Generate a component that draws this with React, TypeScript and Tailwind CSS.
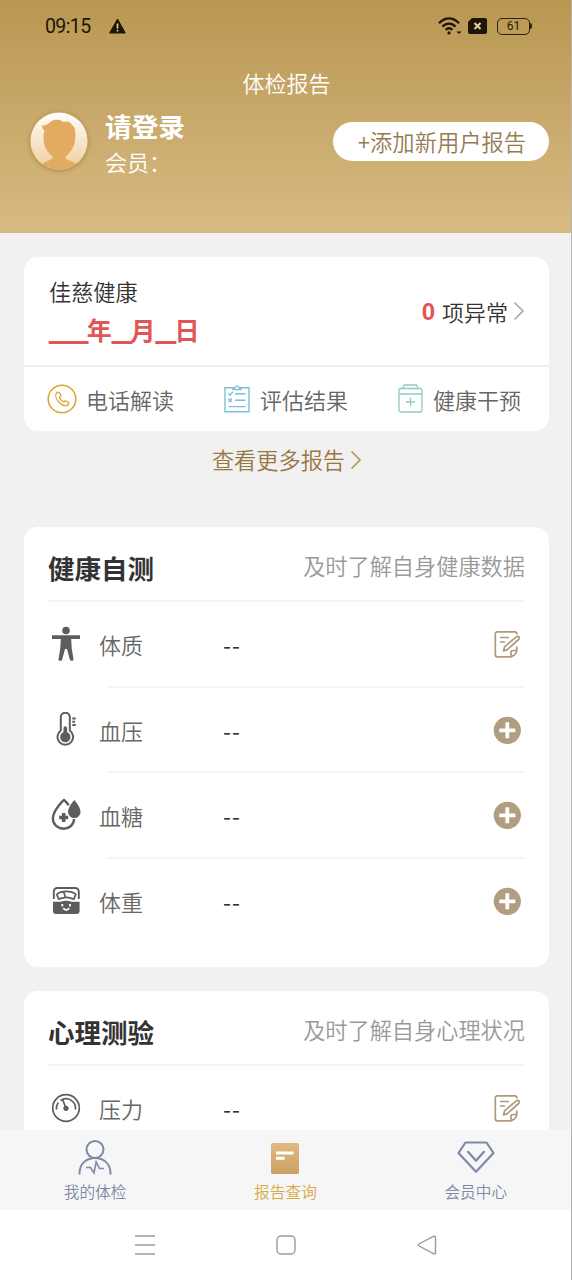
import type { ReactNode } from "react";

const Wifi = () => (
  <svg className="h-[18px] w-[24px]" viewBox="0 0 24 18" fill="none" stroke="#1d1608" strokeWidth="2.300">
    <path d="M1 6.200C7-.3 15-.3 21 6.200" />
    <path d="M4.400 9.600c4-4.100 9.200-4.100 13.200 0" />
    <path d="M7.600 12.800c2.200-2 4.600-2 6.800 0" />
    <circle cx="11" cy="15.900" r="1.600" fill="#1d1608" stroke="none" />
    <path d="M18.500 14.500h5L21 17z" fill="#1d1608" stroke="none" />
  </svg>
);

const StatusBar = () => (
  <div className="flex h-[52px] items-center pl-[45px] pr-[39px] text-[#1d1608]">
    <span className="w-[64px] pt-[2px] font-[Roboto,sans-serif] text-[19.500px] leading-none tracking-[-0.600px]">09:15</span>
    <svg className="h-[16px] w-[17px]" viewBox="0 0 17 16">
      <path d="M8.500 1 16.300 15H.7z" fill="#1d1608" stroke="#1d1608" strokeLinejoin="round" />
      <path d="M8.500 5.500v5M8.500 11.800v1.800" stroke="#e6cf9c" strokeWidth="1.600" />
    </svg>
    <div className="ml-auto flex items-center">
      <Wifi />
      <svg className="ml-[6px] h-[16px] w-[19px]" viewBox="0 0 19 16">
        <path d="M4 0h13a2 2 0 0 1 2 2v12a2 2 0 0 1-2 2H2a2 2 0 0 1-2-2V4z" fill="#1d1608" />
        <path d="m6.500 5 6 6m0-6-6 6" stroke="#e6cf9c" strokeWidth="2" />
      </svg>
      <div className="ml-[10px] flex h-[17px] w-[33px] items-center justify-center rounded-[5px] border-[1.500px] border-[#2c210e] font-[Roboto,sans-serif] text-[12px]">
        61
      </div>
      <div className="h-[6px] w-[2px] rounded-r bg-[#2c210e]" />
    </div>
  </div>
);

const Avatar = () => (
  <svg className="h-[58px] w-[58px] rounded-full shadow-[0_1px_4px_rgba(130,85,20,0.45)]" viewBox="0 0 58 58">
    <defs>
      <linearGradient id="avatarBg" x1="0" y1="0" x2="0" y2="1">
        <stop offset="0" stopColor="#fffefa" />
        <stop offset="1" stopColor="#f0cd9c" />
      </linearGradient>
      <clipPath id="avatarClip">
        <circle cx="29" cy="29" r="28.500" />
      </clipPath>
    </defs>
    <circle cx="29" cy="29" r="28.500" fill="url(#avatarBg)" />
    <g clipPath="url(#avatarClip)" fill="#e2ab5f">
      <path d="M12 13.500C15 13.800 17 13 19.500 10.800 22.500 7 30 7 33 10 36 8.800 41 9.500 42 13 45.500 15 45.500 21 45.200 26.500 44.900 33 42.500 37.500 38 42.500L33 47H25L20 42.500C15.500 37.500 13.500 32 13.500 26 13.500 22.500 13.800 20.500 14.500 18.500 13 17.500 12 15.500 12 13.500Z" />
      <path d="M24 42h10c0 3 1.500 5 5 6.500 4.500 1.800 8 3.500 9 6v6H10v-6c1-2.500 4.500-4.200 9-6 3.500-1.500 5-3.500 5-6.500z" />
    </g>
  </svg>
);

const Chevron = ({ color }: { color: string }) => (
  <svg className="h-[20px] w-[12px]" viewBox="0 0 12 20" fill="none">
    <path d="m1.500 1.500 8.500 8.500-8.500 8.500" stroke={color} strokeWidth="1.700" />
  </svg>
);

const PhoneIcon = () => (
  <svg className="h-[30px] w-[30px]" viewBox="0 0 30 30" fill="none" stroke="#dba637">
    <circle cx="15" cy="15" r="13.800" strokeWidth="1.600" />
    <path
      strokeWidth="1.400"
      strokeLinejoin="round"
      d="M9.200 9.300c1.200-1.600 2.600-1.600 3.600 0l.8 1.600c.5 1.100-.1 1.700-1.100 2.400.5 2 2.200 3.800 4.400 4.600.9-1.200 1.800-1.300 2.900-.6l1.400 1c1 .8.600 2-.7 2.900-2.200 1.500-5.500 0-8-2.400-2.700-2.600-4.900-6.800-3.300-9.500z"
    />
  </svg>
);

const ResultIcon = () => (
  <svg className="h-[28px] w-[26px]" viewBox="0 0 26 28" fill="none" stroke="#7cc0dc" strokeWidth="1.400">
    <path d="M9 2.800H1v24h24v-24h-8M9 4.500V2.800h1.800a2.300 2.300 0 0 1 4.400 0H17v1.700z" />
    <path d="M11 8.800h10.500M11 15.200h10.500M4.500 21.600h17M4.200 8.500 6 10.200l3-3.600M4.500 13.500l3.400 3.400m0-3.400-3.400 3.400" />
  </svg>
);

const CareIcon = () => (
  <svg className="h-[29px] w-[25px]" viewBox="0 0 25 29" fill="none" stroke="#90cabe" strokeWidth="1.300">
    <path d="M4.500 4.500 6.500 1h12l2 3.500" />
    <rect x="1" y="4.500" width="23" height="23.500" rx="2" />
    <path d="M1 10h23M12.500 13.500v9M8 18h9" />
  </svg>
);

const BodyIcon = () => (
  <svg className="h-[36px] w-[30px]" viewBox="0 0 30 36" fill="#5d5d5d">
    <circle cx="15" cy="4.500" r="3.800" />
    <path d="M1 9.200h28v3.900h-8.800l.5 9.100 1.800 11c.1 1.900-3.200 2.100-3.700.2L16 23h-2l-2.800 10.400c-.5 1.900-3.900 1.700-3.700-.2l1.800-11 .5-9.100H1z" />
  </svg>
);

const PressureIcon = () => (
  <svg className="h-[36px] w-[30px]" viewBox="0 0 30 36" fill="none" stroke="#5d5d5d" strokeWidth="2">
    <path d="M9.800 18.500V5.200a4.500 4.500 0 0 1 9 0v13.300a7.800 7.800 0 1 1-9 0z" />
    <circle cx="14.300" cy="25" r="5.200" fill="#5d5d5d" stroke="none" />
    <path d="M14.300 25v-9" strokeWidth="3.600" strokeLinecap="round" />
    <path d="M21.300 6.400h3.500M21.300 9.700h2.800M21.300 13h3.500" />
  </svg>
);

const SugarIcon = () => (
  <svg className="h-[36px] w-[30px]" viewBox="0 0 30 36">
    <path
      d="M17.800 8.200C15.600 5.300 13 2.800 13 2.800S1.900 13 1.900 21.500c0 6.200 5 10.200 10.800 10.200 5.500 0 10.200-4 10.400-9.700"
      fill="none"
      stroke="#5d5d5d"
      strokeWidth="2.400"
      strokeLinejoin="round"
    />
    <path d="M12.700 16v9M8.200 20.500h9" stroke="#5d5d5d" strokeWidth="3.600" />
    <path d="M23.300 3s-6.300 7-6.300 11.800a6.300 6.300 0 0 0 12.600 0C29.600 10 23.300 3 23.300 3z" fill="#5d5d5d" />
  </svg>
);

const WeightIcon = () => (
  <svg className="h-[36px] w-[30px]" viewBox="0 0 30 36" fill="none" stroke="#5d5d5d">
    <path d="M2.800 16V8.500A3.500 3.500 0 0 1 6.300 5h18a3.500 3.500 0 0 1 3.500 3.500V16" strokeWidth="1.900" />
    <path d="M5.800 11.300c4.500-4 14.500-4 19 0l-2 4.800q-7.500-3.300-15 0zM12.800 9l1.500 5" strokeWidth="1.700" strokeLinejoin="round" />
    <path d="M2 18.800h7.500q5.500-2 11 0h8.100v9.300a3 3 0 0 1-3 3H5a3 3 0 0 1-3-3z" fill="#5d5d5d" stroke="none" />
    <path d="M11.300 21v2.500M19 21v2.500M12.500 25c1 2.600 4.500 2.600 5.500 0" stroke="#fff" strokeWidth="1.800" />
  </svg>
);

const StressIcon = () => (
  <svg className="h-[36px] w-[30px]" viewBox="0 0 30 36" fill="none" stroke="#5d5d5d" strokeWidth="1.700">
    <circle cx="15" cy="18" r="13.300" />
    <path d="M5.500 19.500a9.500 9.500 0 0 1 1.800-7M9.500 10.500a9.500 9.500 0 0 1 14.900 9M15 18.200l-3.300-8.500" />
    <circle cx="15" cy="18.300" r="2.600" fill="#5d5d5d" stroke="none" />
  </svg>
);

const EditIcon = () => (
  <svg className="h-[28px] w-[28px]" viewBox="0 0 28 28" fill="none" stroke="#ad9a7d" strokeWidth="1.700" strokeLinejoin="round">
    <path d="M23.800 4.500v-.7a2 2 0 0 0-2-2H4.300a2 2 0 0 0-2 2v21a2 2 0 0 0 2 2H18c3.500-1.300 5.800-3.800 5.800-7v-3.300" />
    <path d="M18 26.500v-4.200c0-1.200.8-1.800 2-1.800h3.500M7 7.500h9M7 12h5" />
    <path d="m10.500 21 1.200-4.300L23.300 6.800c2-1.400 4 .8 2.300 2.700L14.300 19.600z" />
  </svg>
);

const AddIcon = () => (
  <svg className="h-[28px] w-[28px]" viewBox="0 0 28 28">
    <circle cx="14.300" cy="14.300" r="13.600" fill="#b19d80" />
    <path d="M14.300 6.300v16M6.300 14.300h16" stroke="#fff" strokeWidth="3.800" />
  </svg>
);

interface RowProps {
  icon: ReactNode;
  label: string;
  action: ReactNode;
  divider?: boolean;
}

const Row = ({ icon, label, action, divider }: RowProps) => (
  <div>
    <div className="flex h-[83.700px] items-center pl-[3px] pr-[4px]">
      {icon}
      <span className="ml-[18px] w-[124px] pt-[1px] text-[22px] font-[350] text-[#666]">{label}</span>
      <span className="pt-[1px] text-[23px] tracking-[1px] text-[#333]">--</span>
      <div className="ml-auto">{action}</div>
    </div>
    <div className={divider ? "ml-[59px] h-[2px] bg-[#f5f5f5]" : "h-[2px]"} />
  </div>
);

const SectionHead = ({ title, hint }: { title: string; hint: string }) => (
  <div className="flex h-[75px] items-center justify-between border-b-2 border-[#f4f4f4]">
    <h2 className="pt-[9px] text-[26.500px] font-bold text-[#333]">{title}</h2>
    <span className="pt-[4px] text-[22.200px] font-[350] text-[#999]">{hint}</span>
  </div>
);

const Blank = ({ children }: { children: string }) => (
  <span className="font-['Liberation_Sans',sans-serif] text-[20px] font-bold tracking-[-1.700px] [text-shadow:0_-1px_0_currentColor,0_1px_0_currentColor]">
    {children}
  </span>
);

const ReportCard = () => (
  <section className="flex h-[174px] flex-col rounded-[14px] bg-white">
    <div className="flex h-[108px] items-center justify-between pl-[25px] pr-[24px]">
      <div>
        <p className="pt-[3px] text-[22.200px] font-[350] leading-[36px] text-[#333]">佳慈健康</p>
        <p className="text-[25px] font-bold leading-[40px] text-[#e05656]">
          <Blank>____</Blank>年<Blank>__</Blank>月<Blank>__</Blank>日
        </p>
      </div>
      <div className="flex items-center text-[22px] font-[350] text-[#333]">
        <span className="mr-[7px] pt-[2px] font-['Liberation_Sans',sans-serif] text-[24px] font-bold text-[#e05656]">0</span>
        项异常
        <span className="ml-[5px]">
          <Chevron color="#aaa" />
        </span>
      </div>
    </div>
    <div className="h-[2px] bg-[#efefef]" />
    <div className="flex flex-1 items-center justify-between pl-[23px] pr-[28px] pb-[1px] text-[22px] font-[350] leading-[30px] text-[#666]">
      <div className="flex items-center gap-[9px]">
        <PhoneIcon />
        电话解读
      </div>
      <div className="flex items-center gap-[10px]">
        <ResultIcon />
        评估结果
      </div>
      <div className="flex items-center gap-[10px]">
        <CareIcon />
        健康干预
      </div>
    </div>
  </section>
);

const TabBar = () => (
  <nav className="grid h-[80px] shrink-0 grid-cols-3 bg-[#f6f6f7] text-[15.700px] font-[350] leading-[24px] text-[#7c8ba5]">
    <div className="flex flex-col items-center pt-[9px]">
      <svg className="mb-[4px] h-[37px] w-[34px]" viewBox="0 0 34 37" fill="none" stroke="#7c8ba5" strokeWidth="2">
        <circle cx="17" cy="10.500" r="8.500" />
        <path d="M1.500 35.500v-2C2 24.500 8.500 19 17 19s15 5.500 15.500 14.500v2" />
        <path d="M8 28.500h4.500l3.500 5.500 2.200-11 3.300 6.500H26" strokeWidth="1.600" />
      </svg>
      我的体检
    </div>
    <div className="flex flex-col items-center pt-[9px] text-[#d8ab45]">
      <svg className="mb-[4px] h-[37px] w-[30px]" viewBox="0 0 30 37">
        <defs>
          <linearGradient id="report" x1="0" y1="0" x2="0" y2="1">
            <stop offset="0" stopColor="#dfba83" />
            <stop offset="1" stopColor="#cba063" />
          </linearGradient>
        </defs>
        <rect x="1" y="4" width="28" height="31" rx="1.500" fill="url(#report)" />
        <path d="M6 14h17.500M6 19.200h8.500" stroke="#fff" strokeWidth="3" />
      </svg>
      报告查询
    </div>
    <div className="flex flex-col items-center pt-[9px]">
      <svg className="mb-[4px] h-[37px] w-[38px]" viewBox="0 0 38 37" fill="none" stroke="#7c8ba5" strokeWidth="2.200" strokeLinejoin="round">
        <path d="M8.500 3.500h21L36.500 14 19 32.800 1.500 14z" />
        <path d="m11 12.800 8 9 8-9" strokeLinecap="round" />
      </svg>
      会员中心
    </div>
  </nav>
);

const SystemNav = () => (
  <div className="flex h-[70px] shrink-0 items-center justify-center gap-[121px] bg-white">
    <svg className="h-[20px] w-[20px]" viewBox="0 0 20 20" stroke="#9a9a9a" strokeWidth="1.400">
      <path d="M0 1h20M0 10h20M0 19h20" />
    </svg>
    <svg className="h-[20px] w-[20px]" viewBox="0 0 20 20" fill="none" stroke="#9a9a9a" strokeWidth="1.400">
      <rect x="1" y="1" width="18" height="18" rx="4" />
    </svg>
    <svg className="h-[20px] w-[20px]" viewBox="0 0 20 20" fill="none" stroke="#9a9a9a" strokeWidth="1.400" strokeLinejoin="round">
      <path d="M17 1.200 2 9q-1.500 1 0 2l15 7.800q1.500.5 1.500-1V2.200q0-1.400-1.500-1z" />
    </svg>
  </div>
);

const App: React.FC = () => {
  return (
    <div className="flex h-[1280px] w-[572px] flex-col overflow-hidden border-r border-[#b5b5b5] bg-[#f1f1f1] font-['Noto_Sans_CJK_SC',sans-serif]">
      <header className="h-[233px] shrink-0 bg-linear-to-b from-[#b99751] to-[#d8bb84] text-white">
        <StatusBar />
        <h1 className="pl-[2px] pt-[13px] text-center text-[22px] font-[350] leading-[34px]">体检报告</h1>
        <div className="flex items-center pl-[30px] pr-[22px] pt-[5px]">
          <Avatar />
          <div className="ml-[17px] pt-[4px]">
            <p className="text-[26.700px] font-bold leading-[36px]">请登录</p>
            <p className="text-[22px] font-[350] leading-[34px]">会员：</p>
          </div>
          <button className="ml-auto h-[39px] w-[216px] rounded-full bg-white pl-[2px] text-[22.300px] font-[350] leading-[39px] text-[#967b50]">
            +添加新用户报告
          </button>
        </div>
      </header>
      <main className="min-h-0 flex-1 overflow-hidden px-[24px] pr-[22px] pt-[24px]">
        <ReportCard />
        <div className="flex h-[96px] items-start justify-center gap-[5px] pl-[1px] pt-[11px] text-[22.200px] font-[350] leading-[34px] text-[#9a7640]">
          查看更多报告
          <span className="pt-[8px]">
            <Chevron color="#b9985f" />
          </span>
        </div>
        <section className="h-[440px] rounded-[14px] bg-white px-[24px]">
          <SectionHead title="健康自测" hint="及时了解自身健康数据" />
          <Row icon={<BodyIcon />} label="体质" action={<EditIcon />} divider />
          <Row icon={<PressureIcon />} label="血压" action={<AddIcon />} divider />
          <Row icon={<SugarIcon />} label="血糖" action={<AddIcon />} divider />
          <Row icon={<WeightIcon />} label="体重" action={<AddIcon />} />
        </section>
        <section className="mt-[24px] h-[440px] rounded-[14px] bg-white px-[24px]">
          <SectionHead title="心理测验" hint="及时了解自身心理状况" />
          <Row icon={<StressIcon />} label="压力" action={<EditIcon />} divider />
        </section>
      </main>
      <TabBar />
      <SystemNav />
    </div>
  );
};

export default App;
